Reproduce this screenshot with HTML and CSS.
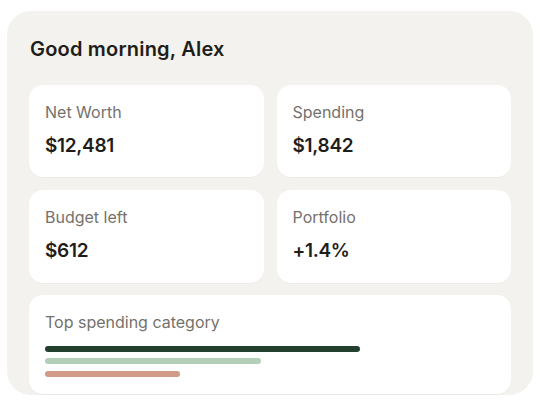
FILE: index.html
```html
<!DOCTYPE html>
<html lang="en">
<head>
    <meta charset="UTF-8">
    <meta name="viewport" content="width=device-width, initial-scale=1.0">
    <title>Dashboard</title>
    <link rel="stylesheet" href="styles.css">
</head>
<body>
    <div class="panel">
        <h1 class="greeting">Good morning, Alex</h1>
        <div class="stats">
            <div class="card">
                <div class="card-label">Net Worth</div>
                <div class="card-value">$12,481</div>
            </div>
            <div class="card">
                <div class="card-label">Spending</div>
                <div class="card-value">$1,842</div>
            </div>
            <div class="card">
                <div class="card-label">Budget left</div>
                <div class="card-value">$612</div>
            </div>
            <div class="card">
                <div class="card-label">Portfolio</div>
                <div class="card-value">+1.4%</div>
            </div>
            <div class="card card-wide">
                <div class="card-label">Top spending category</div>
                <div class="bars">
                    <div class="bar bar-dark" style="width: 70%"></div>
                    <div class="bar bar-sage" style="width: 48%"></div>
                    <div class="bar bar-clay" style="width: 30%"></div>
                </div>
            </div>
        </div>
    </div>
</body>
</html>
```

FILE: styles.css
```css
body {
    margin: 0;
    background-color: #fff;
    font-family: Inter, "Noto Sans", sans-serif;
    color: #1f1d1a;
}
.panel {
    width: 526px;
    box-sizing: border-box;
    margin: 11px 0 0 7px;
    padding: 25px 22px 1px;
    background-color: #f3f2ee;
    border-radius: 24px;
}
.greeting {
    margin: 0 0 23px 1px;
    font-size: 20px;
    line-height: 26px;
    font-weight: 600;
    letter-spacing: 0.2px;
}
.stats {
    display: grid;
    grid-template-columns: 1fr 1fr;
    grid-template-rows: 92px 93px 98px;
    column-gap: 13px;
    row-gap: 13px;
}
.card {
    background-color: #fff;
    border-radius: 14px;
    padding: 17px 16px 0;
    box-shadow: 0 1px 1px rgba(0, 0, 0, 0.03);
}
.card-wide {
    grid-column: 1 / span 2;
    margin-top: -1px;
}
.card-label {
    font-size: 16px;
    line-height: 20px;
    color: #75716c;
}
.card-value {
    margin-top: 12px;
    font-size: 19px;
    line-height: 24px;
    font-weight: 600;
    letter-spacing: -0.3px;
}
.bars {
    display: flex;
    flex-direction: column;
    gap: 6px;
    margin-top: 14px;
}
.bar {
    height: 6px;
    border-radius: 3px;
}
.bar-dark {
    background-color: #23402f;
}
.bar-sage {
    background-color: #b3cfb8;
}
.bar-clay {
    background-color: #d09b87;
    margin-top: 1px;
}
```
